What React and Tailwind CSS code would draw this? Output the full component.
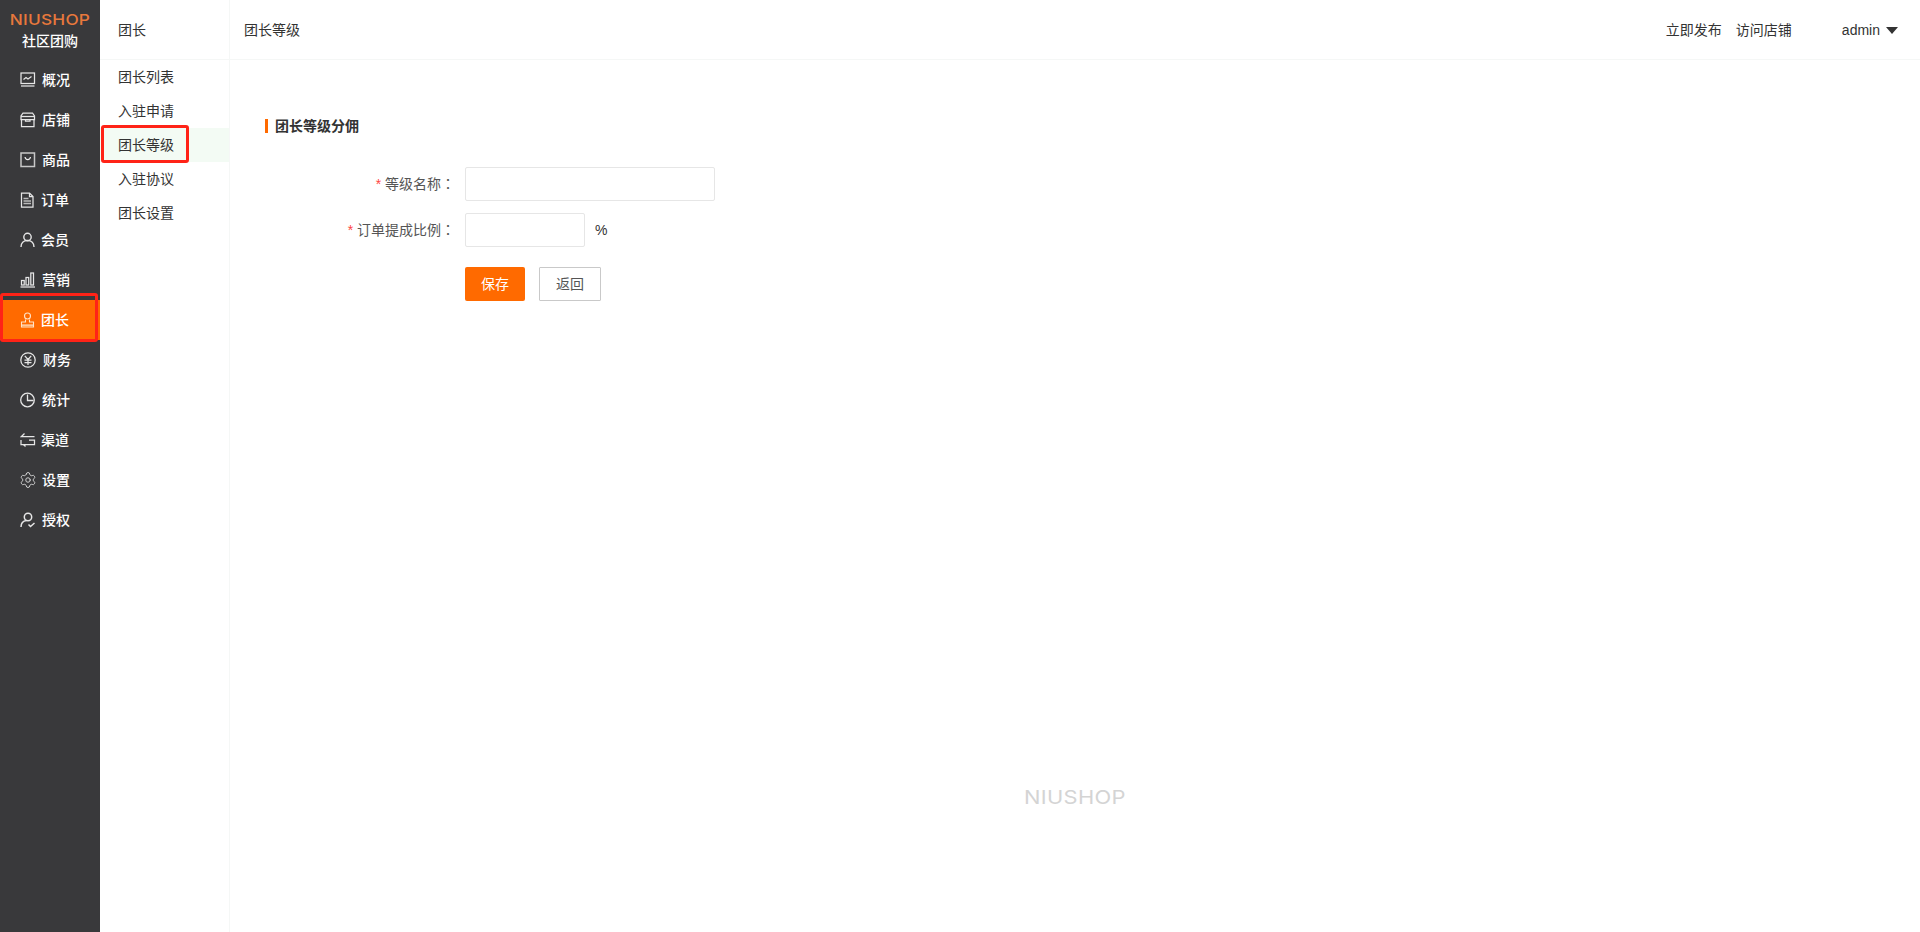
import { Settings } from "lucide-react";

const font = { fontFamily: '"Liberation Sans","Noto Sans CJK SC",sans-serif' };
const tc = { fontFamily: '"Noto Sans CJK TC",sans-serif' };

const S = ({ children, w = 1.25, c = "text-[#e6e6e6]" }) => (
  <svg width="16" height="16" viewBox="0 0 16 16" fill="none" stroke="currentColor" strokeWidth={w} className={`shrink-0 ${c}`}>
    {children}
  </svg>
);

const icons = {
  overview: <S><rect x="1" y="1" width="13.500" height="10.500" /><path d="M3.500 7.500L6 5.500l2 1.500 3.500-2.500" /><path d="M1 14h13.500" /></S>,
  shop: <S><path d="M3 1h9.500l2 3v3.500H1V4z" /><path d="M1.500 7.500v7h12.500v-7" /><path d="M5.500 7v2h4.500V7" /><path d="M1 4.500h13.500" /></S>,
  goods: <S w={1.5} c="text-[#c8c8c8]"><rect x="1" y="1" width="13.500" height="13.500" /><path d="M5 5c.5 3.500 5 3.500 5.500 0" strokeWidth="1.200" stroke="#eee" /></S>,
  order: <S><path d="M1.500 1h8l3.500 3.500V15H1.500z" /><path d="M9.500 1v3.500H13" /><path d="M3.500 6.500h5M3.500 9h7.500M3.500 11.500h7.500" strokeWidth="1.500" stroke="#bbb" /></S>,
  member: <S w={1.400}><circle cx="7.500" cy="5" r="3.700" /><path d="M1 15c0-4 2.500-6.500 6.500-6.500S14 11 14 15" /></S>,
  market: <S><path d="M.500 15h14.500" /><rect x="1.500" y="8.500" width="2.700" height="4.500" /><rect x="6" y="5.500" width="2.700" height="7.500" /><rect x="10.800" y="1" width="2.700" height="12" /></S>,
  leader: <S w={1.100} c="text-[#ffe3c8]"><circle cx="7.500" cy="4" r="3" /><path d="M5.500 7.500v2.500h-4v5H13.500v-5h-4V7.500" /><path d="M2 13.300h11" strokeWidth="2" stroke="#ffc89c" /></S>,
  finance: <S><circle cx="8" cy="8" r="7.200" /><path d="M4.800 3.800L8 7.500l3.200-3.700M4.500 8h7M4.500 10.500h7M8 7.500v5.500" /></S>,
  stats: <S w={1.300}><circle cx="7.500" cy="8" r="6.800" /><path d="M7.500 2.500V8.500h6" /></S>,
  channel: <S><path d="M4.500 1.500L1.500 4.500h13" /><path d="M1 8v4.500h4" /><path d="M9 8h5.500v4.500H3.500l2 2" /></S>,
  settings: <Settings size={18} strokeWidth={1.300} className="-ml-[1px] -mr-[1px] shrink-0 text-[#d4d4d4]" />,
  auth: <S w={1.500}><circle cx="8" cy="5" r="3.700" /><path d="M1 15c0-3.500 2-6 5.500-6.500" /><path d="M8.500 12.500l2 2 4-3.500" /></S>,
};

const menu = [
  ["overview", "概况", "ml-[6px]"],
  ["shop", "店铺", "ml-[6px]"],
  ["goods", "商品", "ml-[6px]"],
  ["order", "订单", "ml-[5px]"],
  ["member", "会员", "ml-[5px]"],
  ["market", "营销", "ml-[6px]"],
  ["leader", "团长", "ml-[5px]"],
  ["finance", "财务", "ml-[7px]"],
  ["stats", "统计", "ml-[6px]"],
  ["channel", "渠道", "ml-[5px]"],
  ["settings", "设置", "ml-[6px]"],
  ["auth", "授权", "ml-[6px]"],
];

const sub = ["团长列表", "入驻申请", "团长等级", "入驻协议", "团长设置"];

export default function App() {
  return (
    <div style={font} className="relative flex h-[932px] w-[1920px] overflow-hidden bg-white text-[14px] text-[#333]">
      <aside className="flex w-[100px] shrink-0 flex-col bg-[#39393b]">
        <div className="flex h-[60px] flex-col items-center pt-[11px]">
          <span style={{ fontFamily: '"Inter",sans-serif' }} className="scale-x-[1.15] text-[15px] leading-[18px] font-medium tracking-[0.2px] text-[#e8783c]">NIUSHOP</span>
          <span className="mt-[2px] text-[14px] leading-[20px] font-medium text-white">社区团购</span>
        </div>
        <nav className="flex flex-col">
          {menu.map(([k, t, m]) => (
            <div key={k} className={`flex h-[40px] items-center pl-[20px] font-medium text-white ${k === "leader" ? "bg-[#ff6a00]" : ""}`}>
              {icons[k]}
              <span className={m}>{t}</span>
            </div>
          ))}
        </nav>
      </aside>

      <div className="flex w-[130px] shrink-0 flex-col border-r border-[#f5f7f6]">
        <div className="flex h-[60px] items-center border-b border-[#f5f7f6] pl-[18px] pt-[1px]">团长</div>
        <div className="flex flex-col">
          {sub.map((t) => (
            <div key={t} className={`flex h-[34px] items-center pl-[18px] ${t === "团长等级" ? "bg-[#f3fbf4]" : ""}`}>{t}</div>
          ))}
        </div>
      </div>

      <div className="flex min-w-0 flex-1 flex-col">
        <header className="flex h-[60px] items-center justify-between border-b border-[#f5f7f6] pl-[14px] pr-[22px] pt-[1px]">
          <span>团长等级</span>
          <div className="flex items-center">
            <span>立即发布</span>
            <span className="ml-[14px]">访问店铺</span>
            <span className="ml-[50px]">admin</span>
            <span className="ml-[6px] h-0 w-0 border-x-[6px] border-t-[7px] border-x-transparent border-t-[#333]" />
          </div>
        </header>
        <main className="relative flex-1 pl-[35px] pt-[59px]">
          <div className="flex h-[14px] items-center border-l-[3px] border-[#ff6a00] pl-[7px] font-bold">团长等级分佣</div>
          <div className="mt-[34px] flex h-[34px] items-center">
            <label className="w-[200px] pr-[10px] text-right text-[#555]"><span className="text-[#ff4544]">* </span>等级名称<span style={tc}>：</span></label>
            <input className="h-[34px] w-[250px] rounded-[2px] border border-[#e6e6e6] bg-white" />
          </div>
          <div className="mt-[12px] flex h-[34px] items-center">
            <label className="w-[200px] pr-[10px] text-right text-[#555]"><span className="text-[#ff4544]">* </span>订单提成比例<span style={tc}>：</span></label>
            <input className="h-[34px] w-[120px] rounded-[2px] border border-[#e6e6e6] bg-white" />
            <span className="ml-[10px]">%</span>
          </div>
          <div className="ml-[200px] mt-[20px] flex">
            <button className="h-[34px] w-[60px] rounded-[2px] bg-[#ff6a00] text-white">保存</button>
            <button className="ml-[14px] h-[34px] w-[62px] rounded-[1px] border border-[#c9c9c9] bg-white text-[#555]">返回</button>
          </div>
          <div style={{ fontFamily: '"Inter",sans-serif' }} className="absolute left-[794px] top-[727px] origin-left scale-x-[1.15] text-[19px] leading-[22px] font-normal tracking-[0.3px] text-[#d4d4d4]">NIUSHOP</div>
        </main>
      </div>

      <div className="pointer-events-none absolute left-0 top-[293px] h-[49px] w-[98px] rounded-[3px] border-[3px] border-[#ff2317]" />
      <div className="pointer-events-none absolute left-[101px] top-[125px] h-[38px] w-[88px] rounded-[3px] border-[3px] border-[#ff2317]" />
    </div>
  );
}
